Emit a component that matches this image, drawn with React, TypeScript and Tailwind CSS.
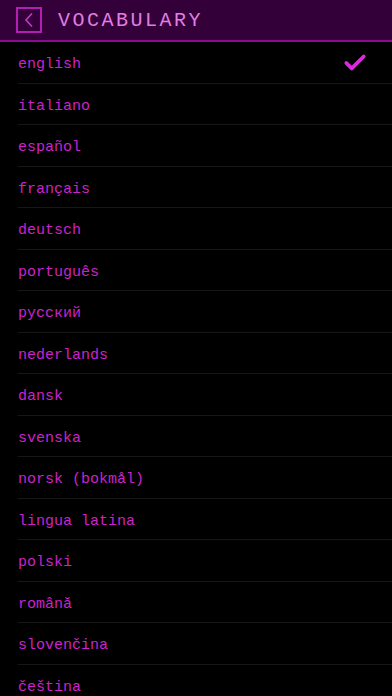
import { Check } from 'lucide-react';

const languages = [
    'english',
    'italiano',
    'español',
    'français',
    'deutsch',
    'português',
    'русский',
    'nederlands',
    'dansk',
    'svenska',
    'norsk (bokmål)',
    'lingua latina',
    'polski',
    'română',
    'slovenčina',
    'čeština',
];

export default function App() {
    return (
        <div className="h-[696px] w-full overflow-hidden bg-black font-['Liberation_Mono','DejaVu_Sans_Mono',monospace]">
            <div className="flex h-[42px] items-center gap-4 border-b-2 border-[#8a0c92] bg-[#33003a] px-4">
                <button className="flex size-[26px] items-center justify-center border-2 border-[#b11fb5] text-[#c43bc6]">
                    <svg width="12" height="16" viewBox="0 0 12 16" fill="none">
                        <path d="M9 1.5 3 8l6 6.5" stroke="currentColor" strokeWidth="1.6" />
                    </svg>
                </button>
                <h1 className="pt-[2px] text-[20px] leading-none tracking-[2.5px] text-[#e07de0]">VOCABULARY</h1>
            </div>
            <ul>
                {languages.map((name, i) => (
                    <li key={name} className="ml-[18px] flex h-[41.5px] items-center justify-between border-b border-[#161616] pt-[6px] pr-6">
                        <span className="text-[15px] text-[#cc22cc]">{name}</span>
                        {i === 0 && <Check size={26} strokeWidth={3.5} className="-mt-[4px] text-[#e424e4]" />}
                    </li>
                ))}
            </ul>
        </div>
    );
}
